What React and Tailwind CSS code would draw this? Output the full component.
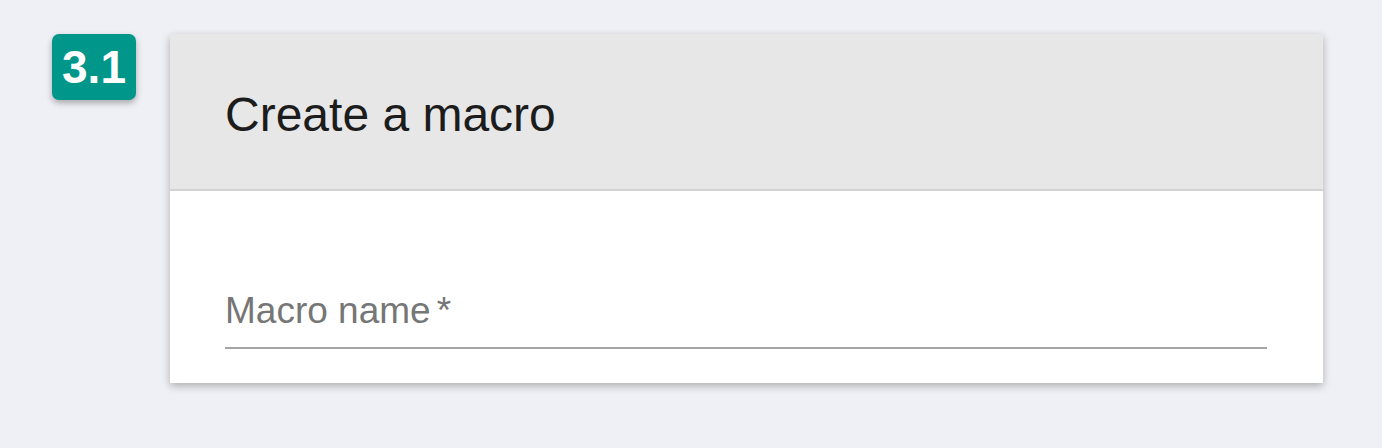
import React from 'react';

export default function App() {
  return (
    <div className="w-[1382px] h-[448px] bg-[#eff0f5] flex items-start pt-[34px] pl-[52px] gap-[34px] font-['Liberation_Sans',Arial,sans-serif]">
      {/* step badge */}
      <div className="w-[84px] h-[66px] rounded-[7px] bg-[#00968a] shadow-[0_3px_6px_rgba(0,0,0,0.3)] flex items-center justify-center">
        <span className="text-white font-bold text-[46px] leading-none">3.1</span>
      </div>

      <div className="w-[1153px] bg-white shadow-[0_3px_8px_rgba(0,0,0,0.28)]">
        <div className="h-[157px] bg-[#e7e7e7] border-b-2 border-[#d2d2d2] pt-[57px] pl-[55px]">
          <h1 className="text-[48px] leading-none text-[#1c1c1c]">Create a macro</h1>
        </div>
        <div className="pt-[101px] pb-[34px] px-[55px] pr-[56px]">
          <div className="text-[37px] leading-none text-[#767676]">
            Macro name<span className="ml-[6px]">*</span>
          </div>
          <div className="mt-[18px] h-[2px] bg-[#a4a4a4]" />
        </div>
      </div>
    </div>
  );
}
